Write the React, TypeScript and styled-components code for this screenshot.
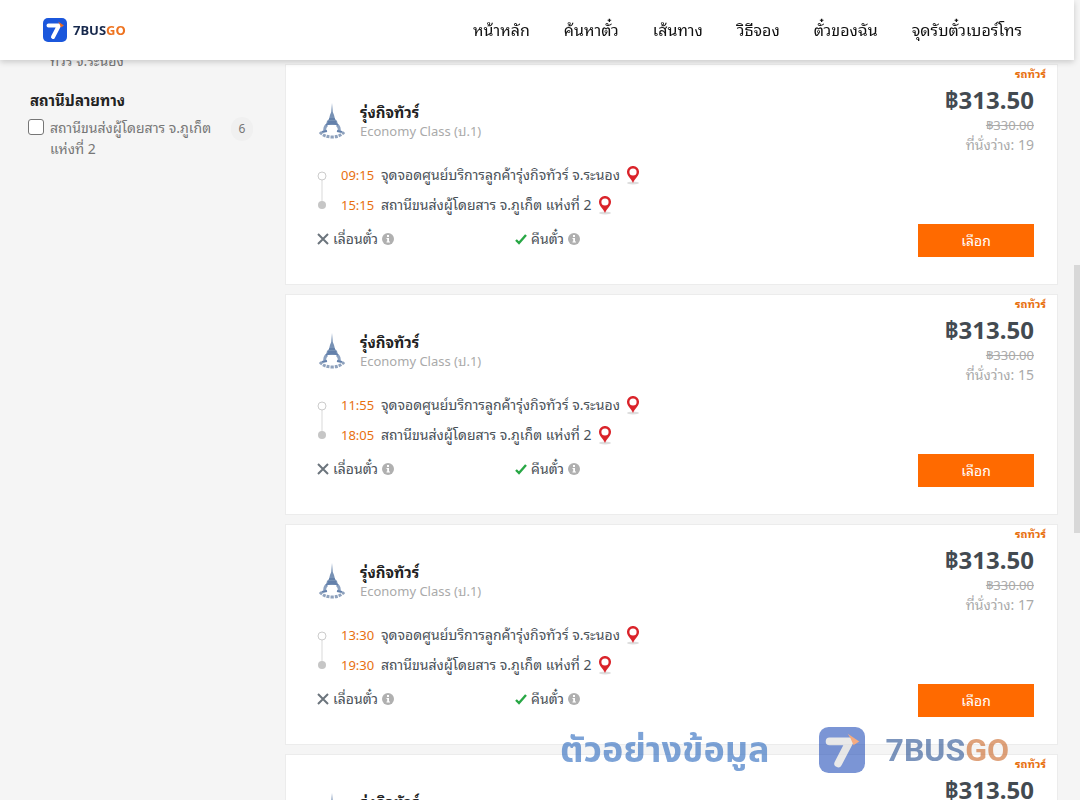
import React from "react";
import styled, { createGlobalStyle } from "styled-components";

const GlobalStyle = createGlobalStyle`
  *, *::before, *::after { box-sizing: border-box; }
  html, body { margin: 0; }
  body {
    height: 100vh;
    overflow: hidden;
    background: #f5f5f5;
    color: #495057;
    font-family: "Noto Sans", "Noto Sans Thai Looped", "Loma", "Waree", "Noto Sans Thai", "Open Sans", sans-serif;
    font-size: 13px;
    line-height: 20px;
  }
  h2, h3, p, ul { margin: 0; padding: 0; }
  ul { list-style: none; }
  svg { display: block; flex: none; }
`;

const Page = styled.div`
  height: 100vh;
  overflow: hidden;
  padding-right: 6px;
  display: flex;
  flex-direction: column;
`;

const Header = styled.header`
  position: relative;
  z-index: 2;
  flex: none;
  height: 60px;
  padding: 0 52px 0 43px;
  display: flex;
  align-items: center;
  justify-content: space-between;
  background: #fff;
  box-shadow: 0 2px 6px rgba(0, 0, 0, 0.18);
`;

const Brand = styled.a`
  display: flex;
  align-items: center;
  gap: 6px;
  color: #17294d;
  font-size: 13px;
  font-weight: 700;
  text-decoration: none;
`;

const BrandAccent = styled.span`
  color: #ee7320;
`;

const Nav = styled.nav`
  display: flex;
  gap: 34px;
`;

const NavLink = styled.a`
  color: #111;
  font-size: 16px;
  line-height: 24px;
  white-space: nowrap;
  text-decoration: none;
`;

const Content = styled.div`
  flex: 1;
  min-height: 0;
  display: flex;
  padding-right: 16px;
`;

const Sidebar = styled.aside`
  flex: none;
  width: 285px;
  padding: 0 32px 0 30px;
  color: #777;
`;

const CutOption = styled.p`
  height: 30px;
  margin-top: -9px;
  padding-left: 20px;
  font-size: 14px;
`;

const FilterTitle = styled.h3`
  margin-top: 9px;
  color: #222;
  font-size: 15px;
  font-weight: 700;
`;

const FilterOption = styled.label`
  display: flex;
  align-items: flex-start;
  margin: 7px 0 0 -2px;
  font-size: 14px;
  line-height: 21px;
`;

const Tick = styled.input`
  appearance: none;
  flex: none;
  width: 16px;
  height: 16px;
  margin: 2px 6px 0 0;
  border: 1px solid #767676;
  border-radius: 3px;
  background: #fff;
`;

const OptionText = styled.span`
  width: 170px;
`;

const Count = styled.span`
  width: 22px;
  height: 24px;
  margin: 0 0 0 auto;
  border-radius: 12px;
  background: #f0f0f0;
  font-size: 12px;
  line-height: 24px;
  text-align: center;
`;

const Results = styled.main`
  flex: 1;
  min-width: 0;
  padding-top: 4px;
`;

const Trip = styled.article`
  display: flex;
  justify-content: space-between;
  height: 221px;
  margin-bottom: 9px;
  padding: 0 11px 0 31px;
  border: 1px solid #ececec;
  background: #fff;
`;

const TripInfo = styled.div`
  flex: 1;
  min-width: 0;
  padding-top: 37px;
`;

const Operator = styled.div`
  display: flex;
  align-items: center;
  height: 38px;
  gap: 13px;
`;

const OperatorName = styled.h2`
  color: #222;
  font-size: 15px;
  font-weight: 700;
  line-height: 20px;
`;

const ServiceClass = styled.p`
  color: #aaa;
  line-height: 18px;
`;

const Route = styled.div`
  display: flex;
  align-items: center;
  margin-top: 25px;
  gap: 14px;
`;

const Stops = styled.ul`
  display: grid;
  gap: 10px;
`;

const Stop = styled.li`
  display: flex;
  align-items: center;
  gap: 7px;
  height: 20px;
  white-space: nowrap;
`;

const StopName = styled.span`
  font-size: 14px;
`;

const Time = styled.time`
  width: 33px;
  color: #e8700f;
`;

const Policies = styled.ul`
  display: flex;
  margin-top: 14px;
`;

const Policy = styled.li`
  display: flex;
  align-items: center;
  width: 198px;
  gap: 4px;
  font-size: 14px;
`;

const Offer = styled.div`
  flex: none;
  display: flex;
  flex-direction: column;
  align-items: flex-end;
`;

const VehicleType = styled.p`
  color: #e8700f;
  font-size: 11px;
  font-weight: 700;
  line-height: 18px;
`;

const Fare = styled.div`
  display: flex;
  flex-direction: column;
  align-items: flex-end;
  padding-right: 12px;
  color: #aaa;
`;

const Price = styled.strong`
  margin-top: 2px;
  color: #434a51;
  font-size: 24px;
  font-weight: 700;
  line-height: 30px;
`;

const Seats = styled.span`
  font-size: 14px;
`;

const SelectButton = styled.button`
  width: 116px;
  height: 33px;
  margin-top: 69px;
  padding: 0;
  border: 0;
  background: #ff6a00;
  color: #fff;
  font: inherit;
  font-size: 14px;
`;

const ScrollTrack = styled.div`
  position: fixed;
  inset: 0 0 0 auto;
  width: 6px;
  padding-top: 265px;
  background: #f5f5f5;
`;

const ScrollThumb = styled.div`
  height: 268px;
  background: #d8d8d8;
`;

const Watermark = styled.div`
  position: fixed;
  right: 71px;
  bottom: 26px;
  z-index: 3;
  display: flex;
  align-items: center;
  height: 48px;
  color: #17438a;
  font-family: Roboto, "Noto Sans Thai", sans-serif;
  font-size: 32px;
  font-weight: 700;
  line-height: 48px;
  opacity: 0.56;
  pointer-events: none;
`;

const SampleLabel = styled.span`
  margin-right: 49px;
  color: #185cb8;
  font-size: 36px;
`;

const WatermarkName = styled.span`
  margin-left: 21px;
`;

const WatermarkAccent = styled.span`
  color: #c75a14;
`;

function SevenMark({ size, tile = "#1b57dc", ink = "#fff" }: { size: number; tile?: string; ink?: string }) {
  return (
    <svg width={size} height={size} viewBox="0 0 48 48" aria-hidden="true">
      <rect width="48" height="48" rx="10" fill={tile} />
      <path d="M11 15H32L20 38" fill="none" stroke={ink} strokeWidth="8" strokeLinecap="round" strokeLinejoin="round" />
      <path d="M30 7 42 15 36 19 33 12Z" fill="#ed6a1f" />
    </svg>
  );
}

function TempleMark() {
  return (
    <svg width="30" height="36" viewBox="0 0 30 36" aria-hidden="true">
      <path d="M15 0 15.8 9 17 12 18 16 20 18 21 22 9 22 10 18 12 16 13 12 14.2 9Z" fill="#7892b5" />
      <path d="M12 16H18M11 19H19" stroke="#4f6f9e" strokeWidth="1" />
      <path d="M10 22Q7 24 8 29M20 22Q23 24 22 29" fill="none" stroke="#8ba1c0" strokeWidth="3" />
      <path d="M9 22Q15 18 21 22" fill="none" stroke="#6481ac" strokeWidth="2" />
      <path d="M5 29 10 28M25 29 20 28" stroke="#6481ac" strokeWidth="2" />
      <path d="M3 29Q7 34 15 34T27 29" fill="none" stroke="#8fa2bd" strokeWidth="3" strokeDasharray="3 1" />
    </svg>
  );
}

function RouteLine() {
  return (
    <svg width="10" height="40" viewBox="0 0 10 40" aria-hidden="true">
      <path d="M5 8V32" stroke="#d9d9d9" strokeWidth="1" />
      <circle cx="5" cy="6" r="4" fill="#fff" stroke="#ccc" />
      <circle cx="5" cy="35" r="4" fill="#c6c6c6" />
    </svg>
  );
}

function Pin() {
  return (
    <svg width="12" height="19" viewBox="0 0 12 19" aria-hidden="true">
      <ellipse cx="6" cy="17" rx="6" ry="1.5" fill="#ddd" />
      <path d="M6 0A5.8 5.8 0 0 0 0 6C0 10 4 12 6 17C8 12 12 10 12 6A5.8 5.8 0 0 0 6 0Z" fill="#da232a" />
      <circle cx="6" cy="6" r="3.6" fill="#fff" />
    </svg>
  );
}

function Cross() {
  return (
    <svg width="12" height="12" viewBox="0 0 12 12" aria-hidden="true">
      <path d="M1 1 11 11M11 1 1 11" stroke="#6c757d" strokeWidth="2" />
    </svg>
  );
}

function Check() {
  return (
    <svg width="12" height="12" viewBox="0 0 12 12" aria-hidden="true">
      <path d="M1 7 4 10 11 2" fill="none" stroke="#28a745" strokeWidth="2.4" />
    </svg>
  );
}

function Info() {
  return (
    <svg width="12" height="12" viewBox="0 0 12 12" aria-hidden="true">
      <circle cx="6" cy="6" r="6" fill="#b0b0b0" />
      <path d="M5 2H7V4H5ZM4.5 5H7V8.5H8V9.5H4.5V8.5H5.2V6H4.5Z" fill="#fff" />
    </svg>
  );
}

const links = ["หน้าหลัก", "ค้นหาตั๋ว", "เส้นทาง", "วิธีจอง", "ตั๋วของฉัน", "จุดรับตั๋วเบอร์โทร"];

const trips = [
  { depart: "09:15", arrive: "15:15", seats: 19 },
  { depart: "11:55", arrive: "18:05", seats: 15 },
  { depart: "13:30", arrive: "19:30", seats: 17 },
  { depart: "15:30", arrive: "21:30", seats: 20 },
];

function TripCard({ depart, arrive, seats }: { depart: string; arrive: string; seats: number }) {
  return (
    <Trip>
      <TripInfo>
        <Operator>
          <TempleMark />
          <div>
            <OperatorName>รุ่งกิจทัวร์</OperatorName>
            <ServiceClass>Economy Class (ป.1)</ServiceClass>
          </div>
        </Operator>
        <Route>
          <RouteLine />
          <Stops>
            <Stop>
              <Time>{depart}</Time>
              <StopName>จุดจอดศูนย์บริการลูกค้ารุ่งกิจทัวร์ จ.ระนอง</StopName>
              <Pin />
            </Stop>
            <Stop>
              <Time>{arrive}</Time>
              <StopName>สถานีขนส่งผู้โดยสาร จ.ภูเก็ต แห่งที่ 2</StopName>
              <Pin />
            </Stop>
          </Stops>
        </Route>
        <Policies>
          <Policy><Cross />เลื่อนตั๋ว<Info /></Policy>
          <Policy><Check />คืนตั๋ว<Info /></Policy>
        </Policies>
      </TripInfo>
      <Offer>
        <VehicleType>รถทัวร์</VehicleType>
        <Fare>
          <Price>฿313.50</Price>
          <s>฿330.00</s>
          <Seats>ที่นั่งว่าง: {seats}</Seats>
          <SelectButton type="button">เลือก</SelectButton>
        </Fare>
      </Offer>
    </Trip>
  );
}

export default function App() {
  return (
    <Page>
      <GlobalStyle />
      <Header>
        <Brand href="#">
          <SevenMark size={24} />
          <span>7BUS<BrandAccent>GO</BrandAccent></span>
        </Brand>
        <Nav>
          {links.map((text) => <NavLink key={text} href="#">{text}</NavLink>)}
        </Nav>
      </Header>
      <Content>
        <Sidebar>
          <CutOption>ทัวร์ จ.ระนอง</CutOption>
          <FilterTitle>สถานีปลายทาง</FilterTitle>
          <FilterOption>
            <Tick type="checkbox" />
            <OptionText>สถานีขนส่งผู้โดยสาร จ.ภูเก็ต แห่งที่ 2</OptionText>
            <Count>6</Count>
          </FilterOption>
        </Sidebar>
        <Results>
          {trips.map((trip) => <TripCard key={trip.depart} {...trip} />)}
        </Results>
      </Content>
      <ScrollTrack><ScrollThumb /></ScrollTrack>
      <Watermark>
        <SampleLabel>ตัวอย่างข้อมูล</SampleLabel>
        <SevenMark size={46} tile="#1443b4" ink="#d8d8d8" />
        <WatermarkName>7BUS<WatermarkAccent>GO</WatermarkAccent></WatermarkName>
      </Watermark>
    </Page>
  );
}
